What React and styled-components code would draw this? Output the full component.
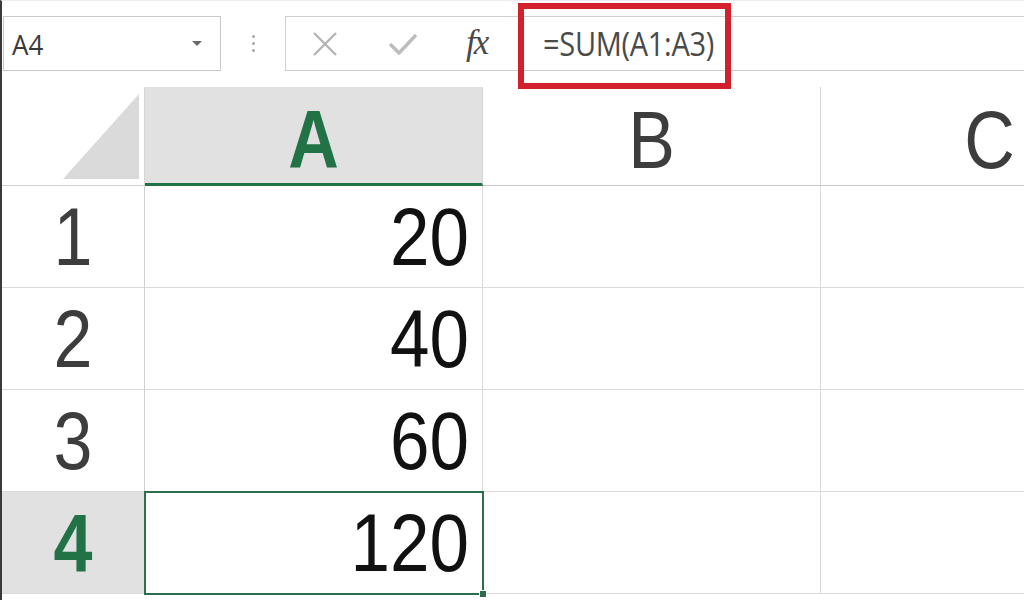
import React from "react";
import styled, { createGlobalStyle } from "styled-components";

const GlobalStyle = createGlobalStyle`
	html, body {
		margin: 0;
		padding: 0;
		background: #ffffff;
		overflow: hidden;
	}
	* {
		box-sizing: border-box;
	}
`;

const columns = ["A", "B", "C"];
const rows = [
	{ id: 1, values: [20, "", ""] },
	{ id: 2, values: [40, "", ""] },
	{ id: 3, values: [60, "", ""] },
	{ id: 4, values: [120, "", ""] },
];
const activeRow = 4;
const activeCol = "A";

const App = () => {
	return (
		<Window>
			<GlobalStyle />
			<Toolbar>
				<NameBox>
					<NameText>A4</NameText>
					<DropArrow />
				</NameBox>
				<Grip>
					<Dot />
					<Dot />
					<Dot />
				</Grip>
				<FuncBox>
					<IconSlot>
						<svg width="26" height="24" viewBox="0 0 26 24">
							<path d="M2 1 L24 23 M24 1 L2 23" stroke="#b4b4b4" strokeWidth="2.4" fill="none" />
						</svg>
					</IconSlot>
					<IconSlot>
						<svg width="30" height="22" viewBox="0 0 30 22">
							<path d="M2 11 L11 20 L28 2" stroke="#bdbdbd" strokeWidth="3.4" fill="none" strokeLinejoin="round" />
						</svg>
					</IconSlot>
					<FxLabel>fx</FxLabel>
				</FuncBox>
				<FormulaInput>
					<FormulaText>=SUM(A1:A3)</FormulaText>
					<Highlight />
				</FormulaInput>
			</Toolbar>

			<SheetViewport>
				<Sheet>
					<CornerCell>
						<CornerTriangle />
					</CornerCell>
					{columns.map((c) => (
						<ColHeader key={c} $active={c === activeCol}>
							<Label $bold={c === activeCol}>{c}</Label>
						</ColHeader>
					))}
					{rows.map((r) => (
						<React.Fragment key={r.id}>
							<RowHeader $active={r.id === activeRow}>
								<Label $bold={r.id === activeRow}>{r.id}</Label>
							</RowHeader>
							{r.values.map((v, i) => {
								const selected = r.id === activeRow && columns[i] === activeCol;
								return (
									<Cell key={i} $selected={selected}>
										<Value>{v}</Value>
										{selected && <FillHandle />}
									</Cell>
								);
							})}
						</React.Fragment>
					))}
				</Sheet>
			</SheetViewport>
		</Window>
	);
};

const Window = styled.div`
	width: 1024px;
	height: 600px;
	overflow: hidden;
	background: #ffffff;
	border-left: 2px solid #3a3a3a;
	border-top: 1px solid #ececec;
	display: flex;
	flex-direction: column;
`;

const Toolbar = styled.div`
	height: 86px;
	flex-shrink: 0;
	display: flex;
	align-items: flex-start;
	padding: 15px 0 0 1px;
`;

const NameBox = styled.div`
	width: 218px;
	height: 55px;
	border: 1px solid #c9c9c9;
	display: flex;
	align-items: center;
	justify-content: space-between;
	padding: 0 18px 0 8px;
`;

const NameText = styled.span`
	font-family: "Open Sans", "Liberation Sans", sans-serif;
	font-size: 26px;
	color: #3a3a3a;
	transform: scaleY(1.08);
`;

const DropArrow = styled.span`
	width: 0;
	height: 0;
	border-left: 5px solid transparent;
	border-right: 5px solid transparent;
	border-top: 5px solid #6a6a6a;
`;

const Grip = styled.div`
	width: 64px;
	height: 55px;
	display: flex;
	flex-direction: column;
	align-items: center;
	justify-content: center;
	gap: 4px;
`;

const Dot = styled.span`
	width: 3px;
	height: 3px;
	border-radius: 50%;
	background: #a8a8a8;
`;

const FuncBox = styled.div`
	width: 233px;
	height: 55px;
	border: 1px solid #cfcfcf;
	border-right: none;
	display: grid;
	grid-template-columns: 78px 76px 1fr;
	align-items: center;
	padding-left: 14px;
`;

const IconSlot = styled.span`
	display: flex;
	align-items: center;
	justify-content: center;
	width: 50px;
`;

const FxLabel = styled.span`
	font-family: "Liberation Serif", "DejaVu Serif", serif;
	font-style: italic;
	font-size: 35px;
	line-height: 1;
	color: #4a4a4a;
	letter-spacing: -2px;
	padding-left: 12px;
	padding-bottom: 2px;
`;

const FormulaInput = styled.div`
	position: relative;
	flex: 1;
	height: 55px;
	border-top: 1px solid #cfcfcf;
	border-bottom: 1px solid #cfcfcf;
	display: flex;
	align-items: center;
	padding-left: 25px;
`;

const FormulaText = styled.span`
	font-family: "Open Sans", "Liberation Sans", sans-serif;
	font-size: 29px;
	color: #4a4a4a;
	letter-spacing: -0.3px;
	transform: scaleY(1.1);
`;

const Highlight = styled.span`
	position: absolute;
	left: 0;
	top: -14px;
	width: 213px;
	height: 86px;
	border: 6px solid #d2202c;
	pointer-events: none;
`;

const SheetViewport = styled.div`
	flex: 1;
	overflow: hidden;
`;

const Sheet = styled.div`
	display: grid;
	grid-template-columns: 143px 338px 338px 338px;
	grid-template-rows: 99px repeat(4, 102px) 40px;
	width: 1157px;
`;

const CornerCell = styled.div`
	position: relative;
	border-right: 1px solid #d6d6d6;
	border-bottom: 1px solid #d0d0d0;
`;

const CornerTriangle = styled.span`
	position: absolute;
	right: 5px;
	bottom: 6px;
	width: 76px;
	height: 85px;
	background: #dadada;
	clip-path: polygon(100% 0, 100% 100%, 0 100%);
`;

const ColHeader = styled.div`
	display: flex;
	align-items: center;
	justify-content: center;
	padding-top: 8px;
	background: ${(p) => (p.$active ? "#e1e1e1" : "#ffffff")};
	border-right: 1px solid #d6d6d6;
	border-bottom: ${(p) => (p.$active ? "3px solid #217346" : "1px solid #c8c8c8")};
`;

const RowHeader = styled.div`
	display: flex;
	align-items: center;
	justify-content: center;
	background: ${(p) => (p.$active ? "#e1e1e1" : "#ffffff")};
	border-right: 1px solid #d0d0d0;
	border-bottom: 1px solid #dadada;
`;

const Label = styled.span`
	display: inline-block;
	font-family: "Liberation Sans", Arial, sans-serif;
	font-size: 70px;
	line-height: 1;
	font-weight: ${(p) => (p.$bold ? 700 : 400)};
	color: ${(p) => (p.$bold ? "#217346" : "#3d3d3d")};
	transform: scaleY(1.16);
`;

const Cell = styled.div`
	position: relative;
	display: flex;
	align-items: center;
	justify-content: flex-end;
	padding-right: 13px;
	border-right: 1px solid #dadada;
	border-bottom: 1px solid #dadada;
	${(p) =>
		p.$selected &&
		`
		z-index: 1;
		outline: 2px solid #2b6e4b;
		outline-offset: -1px;
	`}
`;

const Value = styled.span`
	display: inline-block;
	font-family: "Liberation Sans", Arial, sans-serif;
	font-size: 71px;
	line-height: 1;
	color: #111111;
	transform: scaleY(1.15);
`;

const FillHandle = styled.span`
	position: absolute;
	right: -5px;
	bottom: -5px;
	width: 8px;
	height: 8px;
	background: #2b6e4b;
	border: 1px solid #ffffff;
`;

export default App;
